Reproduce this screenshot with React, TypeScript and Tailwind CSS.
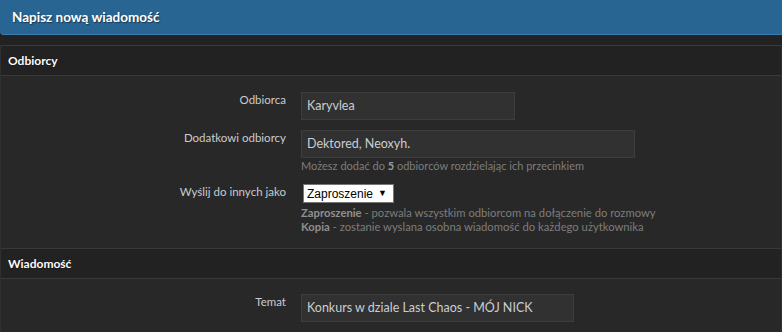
import React from 'react';

const font = { fontFamily: 'Lato, "Noto Sans", sans-serif' };

function Row({ label, children, className = '' }: { label: string; children: React.ReactNode; className?: string }) {
  return (
    <div className={`flex ${className}`}>
      <div className="w-[286px] pr-[1px] text-right text-[11.5px] leading-[16px] text-[#c8ccd0]">{label}</div>
      <div className="pl-[14px]">{children}</div>
    </div>
  );
}

function TextInput({ value, width }: { value: string; width: string }) {
  return (
    <div className={`${width} h-[28px] border border-[#3d3d3d] bg-[#313131] px-[5px] text-[12.5px] leading-[26px] text-[#c9ced2]`}>
      {value}
    </div>
  );
}

function SectionHeader({ title }: { title: string }) {
  return (
    <div className="h-[31px] border-y border-[#393939] bg-[#222222] px-[7px] text-[12px] font-bold leading-[29px] text-white [text-shadow:0_0_1px_#000]">
      {title}
    </div>
  );
}

export default function App() {
  return (
    <div className="h-[332px] w-[782px] overflow-hidden bg-[#222222]" style={font}>
      <div className="h-[35px] rounded-bl-[4px] border-b border-[#3c7db0] bg-[#296592] pl-[12px] text-[13.5px] font-bold leading-[34px] text-white [text-shadow:1px_1px_1px_#163a55]">
        Napisz nową wiadomość
      </div>
      <div className="mt-[10px] border-x border-[#2f2f2f]">
        <SectionHeader title="Odbiorcy" />
        <div className="bg-[#282828] pb-[14px] pt-[16px]">
          <Row label="Odbiorca">
            <TextInput value="Karyvlea" width="w-[214px]" />
          </Row>
          <Row label="Dodatkowi odbiorcy" className="mt-[10px]">
            <TextInput value="Dektored, Neoxyh." width="w-[334px]" />
            <div className="mt-[1px] text-[11px] leading-[14px] text-[#7d7d7d]">
              Możesz dodać do <b className="text-[#9a9a9a]">5</b> odbiorców rozdzielając ich przecinkiem
            </div>
          </Row>
          <Row label="Wyślij do innych jako" className="mt-[11px]">
            <div className="ml-[2px] flex h-[19px] w-[91px] items-center justify-between border border-[#767676] bg-white pl-[3px] pr-[6px] text-[12px] text-black" style={{ fontFamily: '"Liberation Sans", sans-serif' }}>
              <span>Zaproszenie</span>
              <span className="text-[9px]">▼</span>
            </div>
            <div className="mt-[3px] text-[11.25px] leading-[14px] text-[#7d7d7d]">
              <div><b className="text-[#8f8f8f]">Zaproszenie</b> - pozwala wszystkim odbiorcom na dołączenie do rozmowy</div>
              <div><b className="text-[#8f8f8f]">Kopia</b> - zostanie wyslana osobna wiadomość do każdego użytkownika</div>
            </div>
          </Row>
        </div>
        <SectionHeader title="Wiadomość" />
        <div className="bg-[#282828] pb-[20px] pt-[15px]">
          <Row label="Temat">
            <TextInput value="Konkurs w dziale Last Chaos - MÓJ NICK" width="w-[273px]" />
          </Row>
        </div>
      </div>
    </div>
  );
}
